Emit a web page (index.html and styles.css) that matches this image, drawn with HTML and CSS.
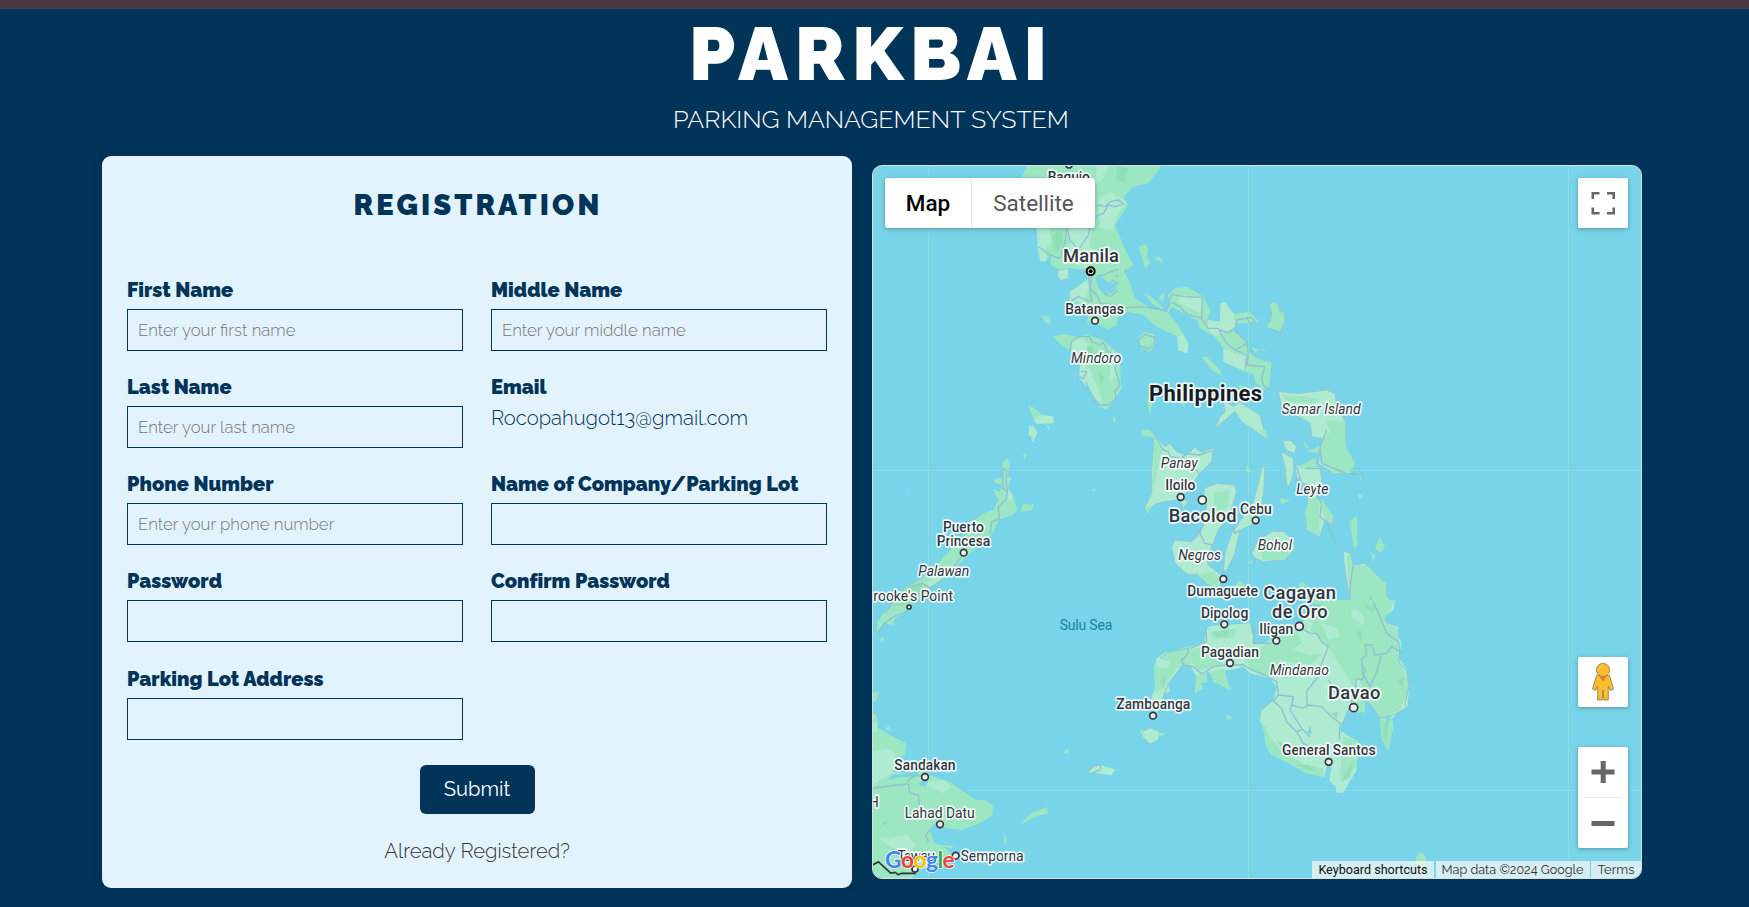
FILE: index.html
```html
<!DOCTYPE html>
<html lang="en">
<head>
<meta charset="utf-8">
<title>ParkBai Registration</title>
<link rel="stylesheet" href="styles.css">
</head>
<body>
<div class="topbar"></div>
<header class="header">
  <h1 class="brand"><span>PARKBAI</span></h1>
  <p class="tagline"><span>PARKING MANAGEMENT SYSTEM</span></p>
</header>
<main class="content">
  <section class="card">
    <h2 class="card-title"><span>REGISTRATION</span></h2>
    <form class="form">
      <div class="fields">
        <div class="field"><label>First Name</label><input type="text" placeholder="Enter your first name"></div>
        <div class="field"><label>Middle Name</label><input type="text" placeholder="Enter your middle name"></div>
        <div class="field"><label>Last Name</label><input type="text" placeholder="Enter your last name"></div>
        <div class="field"><label>Email</label><span class="email">Rocopahugot13@gmail.com</span></div>
        <div class="field"><label>Phone Number</label><input type="text" placeholder="Enter your phone number"></div>
        <div class="field"><label>Name of Company/Parking Lot</label><input type="text"></div>
        <div class="field"><label>Password</label><input type="password"></div>
        <div class="field"><label>Confirm Password</label><input type="password"></div>
        <div class="field"><label>Parking Lot Address</label><input type="text"></div>
      </div>
      <button class="submit" type="button">Submit</button>
      <a class="login">Already Registered?</a>
    </form>
  </section>
  <section class="map">
    <svg class="map-canvas" viewBox="873 166 768 712">
      <!-- Graticule -->
      <path class="grid" d="M928.5 166V878M1248.500 166V878M1568.500 166V878M873 470.500H1641M873 790.500H1641"/>
      <!-- Luzon and Mindoro -->
      <g transform="translate(870 155) scale(.33333)">
        <path class="land" d="M470 30L455 70L480 80L498 95L500 218L505 290L512 320L530 318L537 303L545 305L540 328L570 345L600 340L650 345L652 375L600 410L598 440L640 450L660 470L650 500L680 505L715 523L740 510L742 490L775 470L820 480L860 515L900 535L900 500L875 472L820 457L793 430L780 390L765 350L790 330L765 285L735 210L775 150L760 125L790 95L835 85L870 40V30Z"/>
        <path class="light" d="M500 218L505 290L512 320L530 318L527 285L545 262L538 220ZM590 218L600 270L570 300L600 320L650 340L680 310L660 270L665 218ZM685 130L720 110L770 140L735 190L730 225L690 218ZM600 410L650 375L660 400L640 440L610 440ZM680 30L720 30L700 70L676 90Z"/>
        <path class="dark" d="M745 35L735 75L765 80L775 40ZM545 240L575 225L580 265L560 295L550 280Z"/>
        <path class="water" d="M676 370L695 365L710 380L740 385L735 410L705 420L685 400Z"/>
        <path class="road" d="M592 220L600 255L625 285L655 240L660 218M506 275L540 300L570 310L585 262L590 220M685 365L725 350L770 335L765 355L735 365M665 360L660 400L680 420L692 445L735 450L780 457L820 458L860 470L885 465L900 455M676 370L690 360M700 415L720 425L745 405L745 385L725 375M676 155L690 150L705 155L720 140L745 135L760 148L735 155L715 150L700 175L676 185M600 440L625 425L660 440M655 360L665 440"/>
        <path class="light outlined" d="M565 345L595 340L597 370L570 377L562 362Z"/>
        <path class="land" d="M512 480L535 485L543 507L525 500ZM548 545L580 537L620 545L655 540L700 555L750 600L752 680L755 700L735 735L710 765L690 755L655 700L640 670L630 620L600 590L590 580L575 570ZM806 275L830 268L832 290L825 300L840 325L825 340L818 315ZM855 308L870 305L880 322L862 318ZM822 415L860 440L883 464L850 450ZM866 425L884 415L882 435ZM806 550L825 530L852 540L858 565L840 590L812 580ZM473 748L500 765L520 780L550 785L550 803L495 800ZM728 785L735 785L738 803Z"/>
        <path class="light" d="M630 625L660 640L680 690L700 745L690 755L655 700L628 670ZM600 560L640 545L655 575L640 610L610 605ZM720 600L745 620L740 660L720 680ZM495 785L520 780L550 785L550 803L495 800ZM476 820L485 813L500 825V842L476 842Z"/>
        <path class="dark" d="M650 575L665 570L680 600L665 620ZM685 650L705 665L690 690Z"/>
        <path class="road" d="M600 590L605 560L625 545L660 545L665 560L690 570L700 562L710 585L745 610L735 640L750 690L735 710L738 730L715 750L690 750L675 735L655 700L648 680M632 650L650 650L640 672L628 665M810 555L825 538L852 550L855 570L835 582L812 575Z"/>
      </g>
      <!-- Bicol, Masbate, Samar -->
      <g transform="translate(1100 240) scale(.33333)">
        <path class="land" d="M60 0L100 75L70 90L90 130L105 175L150 205L200 215L212 190L203 165L225 145L262 140L310 170L332 215L320 240L360 245L362 190L375 186L400 220L450 216L477 245L440 250L408 250L403 272L440 300L447 335L470 355L515 368L507 440L490 450L465 425L462 405L432 392L370 365L370 325L345 290L300 265L290 240L215 200L205 220L235 255L265 310L262 340L235 330L232 290L180 260L150 235L105 205L50 225Z"/>
        <path class="light" d="M360 245L362 190L375 186L400 220L405 250L400 270L365 280L345 290L320 260L325 240ZM232 290L250 285L265 310L262 340L235 330ZM370 325L400 340L440 350L432 392L370 365ZM235 165L310 170L300 220L240 190Z"/>
        <path class="road" d="M78 203L120 200L160 205L200 213L210 175L215 163L250 170L307 172L305 235L260 222L240 200L215 187M305 235L325 265L355 265L368 290L380 310L405 330L440 345L435 385M360 270L385 278L408 262L410 240L450 232L468 245L450 250L440 235M403 272L440 305L445 345L440 375L495 380L485 415L490 435L500 445M405 330L442 310"/>
        <path class="land outlined" d="M508 195L522 183L535 195L540 215L553 215L555 245L540 275L497 262L512 240L515 215Z"/>
        <path class="land" d="M115 20L137 13L145 30L140 50L150 65L138 85L130 60ZM162 55L175 52L190 68ZM132 160L160 175L180 193L150 183ZM175 175L192 160L190 185ZM115 290L135 277L165 285L167 310L150 335L120 320ZM305 350L320 350L340 370L355 385L370 410L335 390ZM455 320L475 330L465 340ZM480 328L498 326L490 332ZM417 435L440 440L455 450L480 460L470 465L425 460ZM140 480L160 475L150 527ZM235 483L260 480L252 500ZM38 530L47 545L42 550Z"/>
        <path class="light outlined" d="M370 480L400 500L420 487L480 525L498 595L425 545L405 515L345 565L360 530L375 515Z"/>
        <path class="light outlined" d="M535 455L600 460L680 450L705 460L710 490L735 545L735 620L765 670L750 700L700 700L655 670L665 595L635 590L630 550L545 500Z"/>
        <path class="land" d="M680 540L735 545L737 620L765 670L750 700L700 700L660 665L665 595L690 575ZM545 465L620 470L660 480L640 490L560 485ZM612 600L625 625L615 620ZM620 635L665 615L655 640Z"/>
        <path class="road" d="M115 300L135 283L165 292L162 315L145 327L120 318Z"/>
      </g>
      <!-- Palawan -->
      <g transform="translate(870 420) scale(.33333)">
        <path class="land" d="M397 130L410 112L420 135L412 170L425 175L413 205L428 225L443 270L425 287L390 297L365 345L340 370L300 400L260 440L220 480L180 505L130 555L100 580L75 595L70 615L40 610L20 642L22 605L40 580L75 545L110 500L150 480L200 435L250 380L300 330L320 295L340 280L370 270L385 240L368 208L390 215L395 195L370 185L380 173L397 178ZM453 265L460 252L492 255L485 270L455 276ZM460 102L470 106L463 115ZM665 210L677 205L672 215ZM28 658L42 650L40 667ZM730 0H738L735 8ZM530 15L540 18L535 32Z"/>
        <path class="light" d="M475 20L490 17L502 40L488 67ZM413 205L428 225L425 245L408 235ZM170 490L220 450L210 480L180 505ZM490 0H552L548 10L500 12Z"/>
        <path class="dark" d="M105 500L150 490L160 510L130 545L70 560Z"/>
        <path class="road" d="M400 145L410 150L408 185L412 210L410 235L385 260L388 297L365 305L360 345M275 410L240 455L210 485L180 503L155 490L120 500M150 520L110 575L70 590L45 610L20 642M400 145L398 205L412 215M75 540L45 580"/>
        <path fill="#70dcff" d="M110 218L125 208L115 232Z"/>
      </g>
      <!-- Visayas and northern Mindanao -->
      <g transform="translate(1120 430) scale(.33333)">
        <path class="light outlined" d="M65 0L100 12L135 50L150 40L170 65L200 75L225 52L245 68L280 52L275 95L240 130L185 205L205 215L190 235L180 210L130 215L100 225L82 252L75 232L95 190L95 110L103 25Z"/>
        <path class="land" d="M65 0H92L101 20L66 18ZM103 30L125 55L118 95L105 150L98 180ZM75 232L95 225L82 252Z"/>
        <path class="light outlined" d="M253 175L290 160L345 165L350 185L340 220L325 260L295 300L280 340L260 380L265 405L310 440L295 470L265 465L235 435L200 432L165 400L155 350L165 330L215 335L240 310L250 285L260 225L250 200Z"/>
        <path class="land" d="M280 190L330 180L325 230L285 260ZM235 435L280 425L300 450L285 475Z"/>
        <path class="light outlined" d="M425 115L435 105L432 180L425 220L395 285L360 300L345 370L318 425L310 420L315 370L335 310L370 260L400 215L415 160Z"/>
        <path class="light outlined" d="M395 370L415 330L460 303L490 305L515 325L525 355L495 390L430 395L405 385Z"/>
        <path class="land" d="M420 350L480 350L520 360L490 390L430 390ZM383 398L400 390L395 402ZM480 205L512 210L485 223ZM380 102L392 125L380 128Z"/>
        <path class="light outlined" d="M487 33L510 30L530 50L525 70L500 62ZM483 65L520 85L522 125L510 165L500 170L495 110ZM525 105L600 110L605 150L590 200L640 260L637 285L615 270L600 320L560 300L555 245L570 190L530 140Z"/>
        <path class="land" d="M535 110L585 85L590 110L545 115ZM565 205L595 200L600 320L565 300L555 255ZM604 205L640 260L635 280L612 265ZM690 275L712 255V352H700ZM778 320L795 350L785 368L765 358ZM755 370L767 375L758 395ZM712 120L735 155L720 142ZM712 190L730 198L718 205ZM550 30L568 55L555 50ZM415 0H440V26Z"/>
        <path class="road" d="M103 15L130 60L145 65L150 80L185 85L200 70L240 75L275 62M185 85L200 100L230 120L240 138M253 285L235 300L255 340L280 345M360 300L345 310L340 300M530 110L545 160L570 165M555 115L600 115M590 200L605 220L600 260L620 275L645 340M620 0L600 50L605 100L680 130L720 132L732 150"/>
        <path class="light outlined" d="M258 600L265 590L330 585L390 590L402 620L395 665H248ZM455 640L475 600L520 580L545 585L560 530L600 530L660 510L690 515L672 400L670 362L690 370L700 405L735 400L755 420L785 455L798 455L800 500L820 520L790 555L800 580L830 595L830 630L845 660H430Z"/>
        <path class="land" d="M345 465L360 450L372 465L368 475L340 470ZM535 465L545 455L560 468L545 478ZM580 490L600 500L610 525L575 520ZM680 375L690 375L695 410L740 405L795 460L800 500L820 520L790 555L760 600L720 600L690 510ZM610 580L660 515L700 520L760 600L830 590L845 660H600Z"/>
        <path class="light" d="M695 545L715 540L735 560L735 585L700 560ZM620 600L670 595L700 635L680 660H640Z"/>
        <path class="road" d="M690 510L720 520L740 560L760 600L790 640L800 660M700 405L690 470L690 515M545 575L575 605L610 625L640 660M750 500L775 570L770 600"/>
      </g>
      <!-- Mindanao -->
      <g transform="translate(1110 600) scale(.33333)">
        <path class="light" d="M288 90L300 78L420 70L430 130L485 130L500 90L560 75L700 20L740 0H855L850 30L820 50L825 70L865 80L860 110L875 125L865 170L890 210L898 260L892 320L860 340L850 355L835 350L845 400L835 452L815 415L810 355L780 310L775 280L755 300L765 330L745 340L740 315L720 330L700 365L690 390L720 410L745 425L740 510L700 578L680 578L677 560L658 542L665 500L650 500L643 530L590 520L530 485L480 460L465 400L450 360L455 330L490 300L500 260L480 235L420 220L400 200L365 210L345 210L350 240L362 270L335 255L310 245L320 225L290 215L290 245L270 250L280 265L255 280L260 230L240 195L215 195L175 255L180 275L165 280L140 335L118 330L125 290L145 240L132 205L140 175L165 158L235 140L290 130Z"/>
        <path class="land" d="M640 0L855 0L825 50L825 70L862 85L865 170L898 260L870 330L810 355L780 300L760 260L740 230L730 260L650 130L600 90ZM165 158L235 140L245 190L200 205L160 260L135 280L132 205ZM300 95L380 85L370 115L310 115ZM230 150L290 140L340 190L260 215ZM500 90L560 85L575 130L545 150L600 165L640 160L600 195L510 180L480 230L430 210L400 180L450 150ZM460 370L480 410L520 460L590 495L640 505V530L590 520L480 460L465 430ZM700 410L745 425L740 500L690 545ZM735 305L765 305L765 338L745 335ZM300 218L340 205L362 270L310 245ZM260 225L290 220L290 245L270 250L280 265L255 280ZM810 355L845 345L850 380L835 452L815 415ZM0 505L15 510L5 525ZM350 340L365 355L350 360Z"/>
        <path class="dark" d="M310 95L360 90L350 108L320 112ZM820 370L835 360L830 435L820 410ZM860 240L880 230L880 265ZM665 340L685 335L680 360ZM500 420L520 450L545 470L530 440ZM560 495L600 495L615 515ZM710 510L730 485L720 530L695 545ZM735 100L755 90V125ZM760 10L800 20L785 40ZM155 240L170 225L160 270Z"/>
        <path class="light" d="M725 30L740 28L765 55L760 75L725 50ZM500 260L545 220L560 245L550 275L515 270ZM140 175L180 185L175 205L140 200ZM635 70L680 85L690 110L655 120Z"/>
        <path class="water" d="M593 400L600 375L606 402ZM830 345L840 352L830 390Z"/>
        <path class="road" d="M235 140L235 160L215 180L220 195L250 200L275 222L310 200L345 195L400 195L430 212L475 230L500 245L505 285L490 303L515 325L530 365L560 395L580 430L600 440M288 85L290 125L240 145M505 285L550 290L545 315L580 325L595 315L635 320L665 350L690 370L688 420M545 315L540 330L575 385L600 410M560 395L575 390M485 130L430 130L432 85M565 80L600 100L620 100L635 125L655 140L635 190L620 235L590 275L592 315M770 165L755 175L758 220L780 260L800 215L815 165M770 165L765 135L785 135L795 165L830 160L845 140L870 155L865 125L830 100L810 50L790 5M735 260L740 235L758 240L765 210L757 200M740 255L720 320L700 365L695 375M655 240L680 280"/>
        <path class="coast" d="M870 155L865 185L890 215L897 260L885 310L890 325L850 345L810 355L780 310M235 145L180 155L150 175M220 195L175 250L145 335M455 330L490 300"/>
        <path class="light outlined" d="M97 395L120 383L148 395L145 420L120 433L97 410Z"/>
        <path class="land" d="M87 390L100 390L97 408ZM145 398L170 400L148 410Z"/>
      </g>
      <!-- Borneo and Sulu Archipelago -->
      <g transform="translate(870 680) scale(.33333)">
        <path class="land" d="M8 38L28 35L20 60L8 68ZM8 95L20 105L25 145L60 165L108 190L105 225L75 240L70 275L110 280L145 265L160 280L205 295L240 305L280 335L320 360L345 360L368 375L368 405L330 430L275 450L225 445L195 430L178 450L195 490L230 505L250 530L230 545L200 550L180 560L140 570L125 597H8ZM42 150L55 137L65 152ZM205 495L250 497L245 507ZM452 433L480 402L530 380L535 400L495 410ZM402 455L410 478L404 498ZM580 218L597 202L594 223Z"/>
        <path class="light" d="M8 125L20 130L22 155L8 155ZM8 215L50 205L75 220L80 260L60 285L30 300L8 320ZM25 470L60 475L110 465L138 495L120 520L60 500ZM170 305L220 300L245 320L220 340L175 320ZM650 275L665 260L690 255L735 268L725 286L680 280Z"/>
        <path class="water" d="M55 302L65 285L125 278L145 265L140 290L110 290L75 295ZM143 312L160 300L175 305L165 322Z"/>
        <path class="dark" d="M32 430L55 420L45 435ZM70 590L95 570L120 582L100 590Z"/>
        <path class="road" d="M8 325L60 318L110 312L118 298L140 285L155 290M115 310L120 340L145 345L148 375M178 450L168 465L175 485M650 278L665 263L690 253L693 268L665 280M10 95L22 105"/>
        <path fill="none" stroke="#333" stroke-width="5" d="M8 555L25 545L62 579L75 577L85 584L95 580L135 580L137 572"/>
      </g>
      <g transform="translate(1300 640) scale(.33333)"><path class="land" d="M347 655L355 640H370L378 655L375 675L362 715L350 690Z"/></g>

      <!-- Place names -->
      <g class="labels" transform="translate(870 155) scale(.33333)">
        <text x="533" y="81" textLength="127">Baguio</text><circle cx="597" cy="30" r="9"/>
        <text class="city" x="579" y="322" textLength="168">Manila</text>
        <circle class="capital" cx="662" cy="349" r="12"/><circle class="capital-dot" cx="662" cy="349" r="6"/>
        <text x="586" y="478" textLength="176">Batangas</text><circle cx="675" cy="497" r="10"/>
        <text class="island" x="603" y="625" textLength="151">Mindoro</text>
      </g>
      <g class="labels" transform="translate(1100 240) scale(.33333)">
        <text class="country" x="147" y="484" textLength="339">Philippines</text>
        <text class="island" x="545" y="522" textLength="237">Samar Island</text>
        <text class="island" x="182" y="685" textLength="111">Panay</text>
      </g>
      <g class="labels" transform="translate(870 420) scale(.33333)">
        <text x="219" y="336" textLength="123">Puerto</text><text x="200" y="377" textLength="161">Princesa</text><circle cx="281" cy="398" r="10"/>
        <text class="island" x="145" y="468" textLength="153">Palawan</text>
        <text class="town" x="10" y="544" textLength="239">rooke's Point</text><circle cx="117" cy="561" r="6"/>
        <text class="sea" x="569" y="629" textLength="158">Sulu Sea</text>
      </g>
      <g class="labels" transform="translate(1120 430) scale(.33333)">
        <text x="136" y="181" textLength="90">Iloilo</text><circle cx="182" cy="201" r="10"/>
        <text class="city" x="146" y="275" textLength="204">Bacolod</text><circle cx="247" cy="210" r="12"/>
        <text x="360" y="252" textLength="95">Cebu</text><circle cx="407" cy="271" r="10"/>
        <text class="island" x="529" y="192" textLength="96">Leyte</text>
        <text class="island" x="413" y="361" textLength="103">Bohol</text>
        <text class="island" x="175" y="391" textLength="128">Negros</text>
        <text x="202" y="499" textLength="212">Dumaguete</text><circle cx="310" cy="447" r="10"/>
        <text class="city" x="430" y="508" textLength="218">Cagayan</text><text class="city" x="456" y="564" textLength="167">de Oro</text><circle cx="538" cy="589" r="12"/>
        <text x="243" y="564" textLength="142">Dipolog</text><circle cx="313" cy="583" r="10"/>
        <text x="418" y="612" textLength="102">Iligan</text><circle cx="469" cy="632" r="10"/>
      </g>
      <g class="labels" transform="translate(1110 600) scale(.33333)">
        <text x="273" y="170" textLength="174">Pagadian</text><circle cx="360" cy="189" r="10"/>
        <text class="island" x="479" y="224" textLength="178">Mindanao</text>
        <text class="city" x="654" y="297" textLength="157">Davao</text><circle cx="731" cy="323" r="12"/>
        <text x="19" y="327" textLength="222">Zamboanga</text><circle cx="129" cy="347" r="10"/>
        <text x="516" y="466" textLength="281">General Santos</text><circle cx="656" cy="486" r="10"/>
      </g>
      <g class="labels" transform="translate(870 680) scale(.33333)">
        <text x="73" y="271" textLength="184">Sandakan</text><circle cx="165" cy="291" r="10"/>
        <text class="town" x="104" y="414" textLength="210">Lahad Datu</text><circle cx="210" cy="433" r="10"/>
        <text class="town" x="-4" y="381">H</text>
        <text class="town" x="272" y="543" textLength="189">Semporna</text><circle cx="257" cy="527" r="10"/>
        <text class="town" x="82" y="542" textLength="113">Tawau</text><circle cx="135" cy="567" r="9"/>
        <text class="google" x="45" y="564" textLength="209"><tspan fill="#4285f4">G</tspan><tspan fill="#ea4335">o</tspan><tspan fill="#fbbc05">o</tspan><tspan fill="#4285f4">g</tspan><tspan fill="#34a853">l</tspan><tspan fill="#ea4335">e</tspan></text>
      </g>
    </svg>

    <div class="map-type"><button class="type on">Map</button><button class="type">Satellite</button></div>
    <button class="ctl fullscreen"><svg width="24" height="24" viewBox="0 0 24 24"><path fill="none" stroke="#666" stroke-width="2.600" d="M1.800 8V2.300H8.500M16 2.300H22.700V8M22.700 16.500V22.200H16M8.500 22.200H1.800V16.500"/></svg></button>
    <button class="ctl pegman"><svg width="24" height="40" viewBox="0 0 24 40"><g fill="#fbbf2d" stroke="#8a7350" stroke-width=".8"><path d="M5.500 13.500H18.500L22.500 27L19.500 28.500L17.300 24V38H12.800L12 28L11.200 38H6.700V24L4.500 28.500L1.500 27Z"/><circle cx="12" cy="8" r="6.600"/></g><path fill="#e27a34" d="M8 14.500H16L12 19.500Z"/></svg></button>
    <div class="zoom">
      <button><svg width="24" height="24" viewBox="0 0 24 24"><path fill="#666" d="M9.700 1H14.700V9.500H23.500V14.500H14.700V23H9.700V14.500H.5V9.500H9.700Z"/></svg></button>
      <hr>
      <button><svg width="24" height="24" viewBox="0 0 24 24"><path fill="#666" d="M.5 10H23.500V15H.5Z"/></svg></button>
    </div>
    <div class="attribution"><span class="keys">Keyboard shortcuts</span><span class="copy">Map data ©2024 Google</span><span class="terms">Terms</span></div>
  </section>
</main>
</body>
</html>
```
FILE: styles.css
```css
* { box-sizing: border-box; }
html { height: 100%; overflow: hidden; }
body {
  margin: 0;
  height: 907px;
  overflow: hidden;
  background: #003459;
  color: #003459;
  font-family: Raleway, Lato, "Open Sans", sans-serif;
  font-weight: 300;
}
button { font: inherit; border: 0; padding: 0; margin: 0; }
.topbar { height: 9px; background: #4b3645; border-bottom: 1px solid #45434e; }
.header { height: 147px; color: #fff; display: flex; flex-direction: column; padding-left: 673px; }
.brand { margin: 0; padding: 0 0 0 16px; font-size: 74.500px; line-height: 90px; font-weight: 900; letter-spacing: 6.800px; white-space: nowrap; }
.tagline { margin: 5px 0 0; font-size: 25px; line-height: 30px; white-space: nowrap; }
.content { display: flex; gap: 20px; padding-left: 102px; align-items: flex-start; }
.card {
  width: 750px; height: 732px; background: #e3f3fe; border-radius: 9px;
  padding: 31px 25px 0; box-shadow: 0 0 10px rgba(0, 0, 0, .1);
}
.card-title { margin: 0 0 53px; padding-left: 2px; text-align: center; font-size: 29px; line-height: 36px; font-weight: 900; letter-spacing: 3.100px; }
.form { display: flex; flex-direction: column; align-items: center; }
.fields { width: 700px; display: grid; grid-template-columns: 336px 336px; column-gap: 28px; grid-auto-rows: 97.150px; }
.field { display: flex; flex-direction: column; }
.field label { font-size: 20px; line-height: 28.600px; height: 33px; font-weight: 900; white-space: nowrap; letter-spacing: .02px; }
.field input {
  width: 336px; height: 42px; border: 1px solid #003459; background: transparent; border-radius: 0;
  padding: 0 10px; font: inherit; font-size: 16.800px; outline: 0;
}
.field input::placeholder { color: #757575; opacity: 1; }
.email { font-size: 20.250px; line-height: 24px; }
.submit { margin-top: 3.250px; padding-bottom: 1px; width: 115px; height: 49px; border-radius: 6px; background: #003459; color: #fff; font-size: 20.200px; font-weight: 400; }
.login { margin-top: 23px; color: #333; font-size: 20.250px; line-height: 28px; }

.map { position: relative; margin-top: 9px; width: 770px; height: 714px; border: 1px solid #ddd; border-radius: 10px; overflow: hidden; background: #78d4e8; }
.map-canvas { display: block; width: 768px; height: 712px; }
.grid { fill: none; stroke: #8bdbe3; stroke-width: 1; }
.land { fill: #9ce6c2; }
.light { fill: #afebd1; }
.dark { fill: #90dfb8; }
.water { fill: #78d4e8; }
.outlined { stroke: #92c7d4; stroke-width: 3; stroke-linejoin: round; }
.road, .coast { fill: none; stroke: #8fc1d2; stroke-width: 4; stroke-linejoin: round; }
.coast { stroke-width: 3; }
.labels { font-family: Roboto, sans-serif; font-size: 42px; font-weight: 500; fill: #33363d; }
.labels text { paint-order: stroke; stroke: rgba(255, 255, 255, .85); stroke-width: 10px; stroke-linejoin: round; }
.labels circle { fill: #eee; stroke: #33363d; stroke-width: 5; }
.labels .capital { stroke: #000; stroke-width: 6; }
.labels .capital-dot { fill: #000; stroke: none; }
.labels .city { font-size: 55px; }
.labels .country { font-size: 66px; font-weight: 700; fill: #191b20; }
.labels .island { font-style: italic; font-weight: 400; }
.labels .town { font-weight: 400; }
.labels .sea { font-weight: 400; fill: #16869d; stroke: none; }
.labels .google { font-family: Lato, sans-serif; font-size: 68px; font-weight: 700; stroke-width: 5px; }

.map-type { position: absolute; left: 12px; top: 12px; display: flex; height: 50px; border-radius: 3px; box-shadow: 0 1px 4px rgba(0, 0, 0, .3); overflow: hidden; }
.type { width: 123px; background: #fff; color: #565656; font: 400 22.500px Roboto, sans-serif; }
.type.on { width: 87px; color: #000; font-weight: 500; border-right: 1px solid #e6e6e6; }
.ctl { position: absolute; right: 13px; width: 50px; height: 50px; background: #fff; border-radius: 2px; box-shadow: 0 1px 4px rgba(0, 0, 0, .3); display: flex; align-items: center; justify-content: center; }
.fullscreen { top: 12px; }
.pegman { top: 491px; }
.zoom { position: absolute; right: 13px; top: 581px; width: 50px; height: 101px; background: #fff; border-radius: 2px; box-shadow: 0 1px 4px rgba(0, 0, 0, .3); }
.zoom button { display: flex; width: 50px; height: 50px; align-items: center; justify-content: center; background: none; }
.zoom hr { margin: 0 6px; border: 0; height: 1px; background: #e6e6e6; }
.attribution { position: absolute; right: 0; bottom: 0; height: 17px; display: flex; gap: 1.500px; font-size: 12.600px; line-height: 17px; font-weight: 400; color: #333; white-space: nowrap; }
.attribution span { background: rgba(245, 245, 245, .75); text-align: center; }
.keys { width: 122px; color: #111; font-family: Roboto, sans-serif; }
.copy { width: 154px; }
.terms { width: 50px; font-size: 13px; }
```
